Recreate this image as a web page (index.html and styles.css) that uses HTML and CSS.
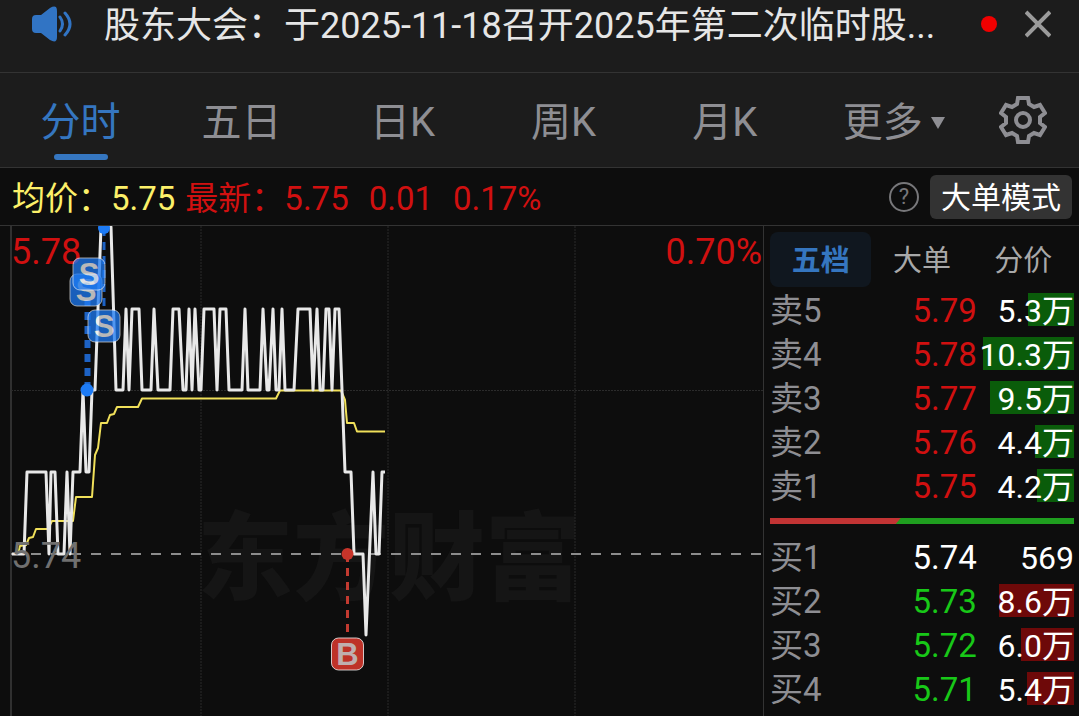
FILE: index.html
```
<!DOCTYPE html>
<html lang="zh-CN">
<head>
    <meta charset="UTF-8">
    <meta name="viewport" content="width=device-width, initial-scale=1.0">
    <title>分时行情</title>
    <link rel="stylesheet" href="styles.css">
</head>
<body>
    <div class="notice">
        <svg class="notice-icon" width="40" height="36" viewBox="0 0 40 36">
            <path d="M4 9H9L18 2Q25 -2 25 5V31Q25 38 18 34L9 27H4Q0 27 0 23V13Q0 9 4 9Z" fill="#3174c4"/>
            <path d="M28 11Q33 18 28 25M33 7Q43 18 33 29" fill="none" stroke="#3174c4" stroke-width="3" stroke-linecap="round"/>
        </svg>
        <div class="notice-text">股东大会：于2025-11-18召开2025年第二次临时股...</div>
        <span class="notice-dot"></span>
        <button class="icon-btn" aria-label="关闭">
            <svg width="26" height="28" viewBox="0 0 26 28">
                <path d="M1 2L25 26M25 2L1 26" stroke="#9b9b9b" stroke-width="4"/>
            </svg>
        </button>
    </div>

    <nav class="tabs">
        <button class="tab active">分时</button>
        <button class="tab">五日</button>
        <button class="tab">日K</button>
        <button class="tab">周K</button>
        <button class="tab">月K</button>
        <button class="tab"><span class="tab-more">更多<i class="arrow"></i></span></button>
        <button class="icon-btn" aria-label="设置">
            <svg width="48" height="50" viewBox="0 0 48 50" fill="none" stroke="#8e8e93" stroke-width="4">
                <path d="M19 3H29L30 9L35 12L41 10L46 18L41 22V28L46 32L41 40L35 38L30 41L29 47H19L18 41L13 38L7 40L2 32L7 28V22L2 18L7 10L13 12L18 9Z"/>
                <circle cx="24" cy="25" r="7"/>
            </svg>
        </button>
    </nav>

    <div class="info">
        <span class="avg">均价：5.75</span>
        <span class="last">最新：5.75</span>
        <span class="change">0.01</span>
        <span class="change">0.17%</span>
        <button class="help" aria-label="帮助">?</button>
        <button class="mode">大单模式</button>
    </div>

    <main class="main">
        <section class="chart">
            <svg class="chart-svg" viewBox="0 0 763 490">
                <text class="watermark" x="389" y="366">东方财富</text>

                <!-- 网格 -->
                <path class="axis" d="M11 0V490"/>
                <path class="grid" d="M201 0V490M388 0V490M575 0V490M11 164.500H763"/>
                <path class="base" d="M11 328H761"/>

                <text class="label up" x="11" y="38">5.78</text>
                <text class="label up end" x="762" y="38">0.70%</text>

                <!-- 均价线 -->
                <polyline class="avg-line" points="12,328 18,328 20,320 26,319 29,312 33,311 36,303 48,303 52,295 73,295 76,271 92,271 95,229 98,222 101,197 107,197 110,189 114,188 117,181 138,181 142,172.500 276,172.500 280,164.500 341,164.500 345,174 347,197 354,197 357,205.500 385,205.500"/>

                <!-- 分时线 -->
                <polyline class="price-line" points="12,328 24,328 27,246 46,246 49,328 51,246 55,246 58,328 64,328 67,246 70,328 73,246 80,246 83,164 86,246 89,246 92,164 95,164 101,1 111,1 116,164 123,164 126,83 129,164 132,83 139,83 142,164 151,164 154,83 158,164 170,164 173,83 179,83 183,164 186,164 189,83 192,164 195,83 199,164 201,164 204,83 214,83 217,164 220,83 226,83 229,164 242,164 245,83 248,164 260,164 263,83 267,164 269,164 273,83 276,164 279,164 282,83 285,164 294,164 298,83 310,83 313,164 317,83 320,164 323,164 326,83 329,83 332,164 335,83 339,83 342,164 345,246 351,246 354,328 363,328 366,409 373,246 376,328 379,328 382,246 385,246"/>

                <text class="label flat" x="11" y="342">5.74</text>

                <!-- 买卖点 -->
                <g class="sell">
                    <path class="lead" d="M86 164V74M89 164V74M104 2V84"/>
                    <circle cx="87" cy="164" r="6.500"/>
                    <circle cx="104" cy="2" r="6"/>
                    <g class="mark">
                        <rect x="70" y="48" width="32" height="32" rx="7"/>
                        <text x="86" y="75">S</text>
                    </g>
                    <g class="mark">
                        <rect x="73" y="32" width="32" height="32" rx="7"/>
                        <text x="89" y="59">S</text>
                    </g>
                    <g class="mark">
                        <rect x="88" y="84" width="32" height="32" rx="7"/>
                        <text x="104" y="111">S</text>
                    </g>
                </g>
                <g class="buy">
                    <path class="lead" d="M347.500 328V408"/>
                    <circle cx="347.500" cy="328" r="6"/>
                    <g class="mark">
                        <rect x="331.500" y="412" width="32" height="32" rx="7"/>
                        <text x="347.500" y="439">B</text>
                    </g>
                </g>
            </svg>
        </section>

        <section class="book">
            <div class="book-tabs">
                <button class="book-tab active">五档</button>
                <button class="book-tab">大单</button>
                <button class="book-tab">分价</button>
            </div>
            <table class="asks">
                <tr><th>卖5</th><td class="price up">5.79</td><td class="vol" style="--bar: 46px">5.3万</td></tr>
                <tr><th>卖4</th><td class="price up">5.78</td><td class="vol" style="--bar: 91px">10.3万</td></tr>
                <tr><th>卖3</th><td class="price up">5.77</td><td class="vol" style="--bar: 84px">9.5万</td></tr>
                <tr><th>卖2</th><td class="price up">5.76</td><td class="vol" style="--bar: 39px">4.4万</td></tr>
                <tr><th>卖1</th><td class="price up">5.75</td><td class="vol" style="--bar: 37px">4.2万</td></tr>
            </table>
            <div class="ratio"><div class="ratio-buy" style="width: 43%"></div></div>
            <table class="bids">
                <tr><th>买1</th><td class="price">5.74</td><td class="vol" style="--bar: 0px">569</td></tr>
                <tr><th>买2</th><td class="price down">5.73</td><td class="vol" style="--bar: 75px">8.6万</td></tr>
                <tr><th>买3</th><td class="price down">5.72</td><td class="vol" style="--bar: 53px">6.0万</td></tr>
                <tr><th>买4</th><td class="price down">5.71</td><td class="vol" style="--bar: 47px">5.4万</td></tr>
            </table>
        </section>
    </main>
</body>
</html>
```
FILE: styles.css
```
* {
    box-sizing: border-box;
}

body {
    margin: 0;
    min-height: 100vh;
    background-color: #0d0d0d;
    color: #fff;
    font-family: Roboto, "Noto Sans CJK SC", sans-serif;
}

button {
    margin: 0;
    padding: 0;
    border: none;
    background: none;
    color: inherit;
    font-family: inherit;
    cursor: pointer;
}

svg {
    display: block;
}

.icon-btn {
    display: flex;
    align-items: center;
    justify-content: center;
}

/* 公告 */
.notice {
    display: flex;
    align-items: center;
    height: 73px;
    padding: 0 28px 24px 32px;
    background-color: #1c1c1c;
    border-bottom: 1px solid #333;
}

.notice-icon {
    flex: none;
    margin-right: 32px;
}

.notice-text {
    flex: 1;
    min-width: 0;
    padding-top: 4px;
    overflow: hidden;
    white-space: nowrap;
    font-size: 36px;
    line-height: 44px;
    color: #e6e6e6;
}

.notice-dot {
    width: 16px;
    height: 16px;
    margin: 0 28px 0 16px;
    border-radius: 50%;
    background-color: #f00000;
}

/* 周期切换 */
.tabs {
    display: grid;
    grid-template-columns: repeat(6, 10fr) 7fr;
    height: 95px;
    background-color: #1c1c1c;
    border-bottom: 1px solid #333;
}

.tab {
    display: flex;
    flex-direction: column;
    align-items: center;
    justify-content: flex-end;
    padding-bottom: 7px;
    font-size: 40px;
    line-height: 56px;
    color: #8e8e93;
}

.tab::after {
    content: "";
    width: 54px;
    height: 6px;
    margin-top: 3px;
    border-radius: 3px;
}

.tab.active {
    color: #3576c0;
}

.tab.active::after {
    background-color: #3576c0;
}

.tab-more {
    display: flex;
    align-items: center;
    gap: 8px;
    padding-left: 16px;
}

.arrow {
    border: 7px solid transparent;
    border-top: 12px solid #8e8e93;
    border-bottom: none;
}

/* 价格信息 */
.info {
    display: flex;
    align-items: center;
    height: 58px;
    padding: 0 7px 0 12px;
    border-bottom: 1px solid #333;
    font-size: 33px;
    line-height: 44px;
}

.avg {
    margin-right: 10px;
    padding-top: 4px;
    color: #fcf069;
}

.last,
.change {
    margin-right: 20px;
    padding-top: 4px;
    color: #d01010;
}

.help {
    width: 30px;
    height: 30px;
    margin-left: auto;
    border: 2px solid #77777a;
    border-radius: 50%;
    color: #77777a;
    font-size: 22px;
    line-height: 26px;
}

.mode {
    height: 44px;
    margin-left: 11px;
    padding: 2px 11px 0;
    border-radius: 6px;
    background-color: #333;
    font-size: 30px;
    line-height: 42px;
}

.main {
    display: grid;
    grid-template-columns: minmax(0, 1fr) 316px;
}

/* 分时图 */
.chart-svg {
    width: 100%;
    height: auto;
}

.watermark {
    fill: #151515;
    font-size: 96px;
    font-weight: 900;
    text-anchor: middle;
}

.axis {
    stroke: #303030;
    stroke-width: 2;
}

.grid {
    stroke: #2b2b2b;
    stroke-width: 1;
    stroke-dasharray: 2 1;
}

.base {
    stroke: #8c8c8c;
    stroke-width: 2;
    stroke-dasharray: 10 10;
}

.label {
    font-size: 36px;
}

.label.up {
    fill: #d01010;
}

.label.flat {
    fill: #707070;
}

.label.end {
    text-anchor: end;
}

.avg-line,
.price-line {
    fill: none;
    stroke-linejoin: round;
}

.avg-line {
    stroke: #f0e05a;
    stroke-width: 2;
}

.price-line {
    stroke: #e8e8e8;
    stroke-width: 3;
}

.lead {
    fill: none;
    stroke-width: 3;
    stroke-dasharray: 8 6;
}

.sell {
    fill: #1d7bf5;
}

.sell .lead {
    stroke: #1d62c4;
}

.buy {
    fill: #c8342a;
}

.buy .lead {
    stroke: #c23a30;
}

.mark rect {
    stroke: #fff;
    stroke-opacity: 0.8;
    stroke-width: 1px;
}

.mark text {
    fill: #f2f2f2;
    font-family: "Liberation Sans", sans-serif;
    font-size: 31px;
    font-weight: bold;
    text-anchor: middle;
}

.sell .mark {
    opacity: 0.75;
}

.buy .mark {
    opacity: 0.95;
}

.buy .mark text {
    fill: #c9b8b8;
}

/* 五档盘口 */
.book {
    padding: 6px 5px 0 6px;
    border-left: 1px solid #333;
}

.book-tabs {
    display: flex;
}

.book-tab {
    flex: 1;
    height: 55px;
    padding-top: 4px;
    border-radius: 8px;
    font-size: 29px;
    line-height: 51px;
    color: #a8a8a8;
}

.book-tab.active {
    background-color: #10171f;
    color: #3576c0;
    font-weight: bold;
}

table {
    width: 100%;
    border-collapse: collapse;
    table-layout: fixed;
    font-size: 33px;
    line-height: 40px;
}

th,
td {
    height: 44px;
    padding: 4px 0 0;
    white-space: nowrap;
}

th {
    width: 30%;
    text-align: left;
    font-weight: 400;
    color: #8e8e93;
}

td {
    text-align: right;
}

.price.up {
    color: #d01010;
}

.price.down {
    color: #18c818;
}

.vol {
    width: 32%;
    font-size: 32px;
    background-repeat: no-repeat;
    background-position: right center;
    background-size: var(--bar) 33px;
}

.asks .vol {
    background-image: linear-gradient(#0a5c0a, #0a5c0a);
}

.bids .vol {
    background-image: linear-gradient(#6e0909, #6e0909);
}

.ratio {
    height: 6px;
    margin: 11px 0 10px;
    background-color: #1f9e1f;
}

.ratio-buy {
    height: 6px;
    background-color: #c23434;
    clip-path: polygon(0 0, 100% 0, calc(100% - 5px) 100%, 0 100%);
}
```
